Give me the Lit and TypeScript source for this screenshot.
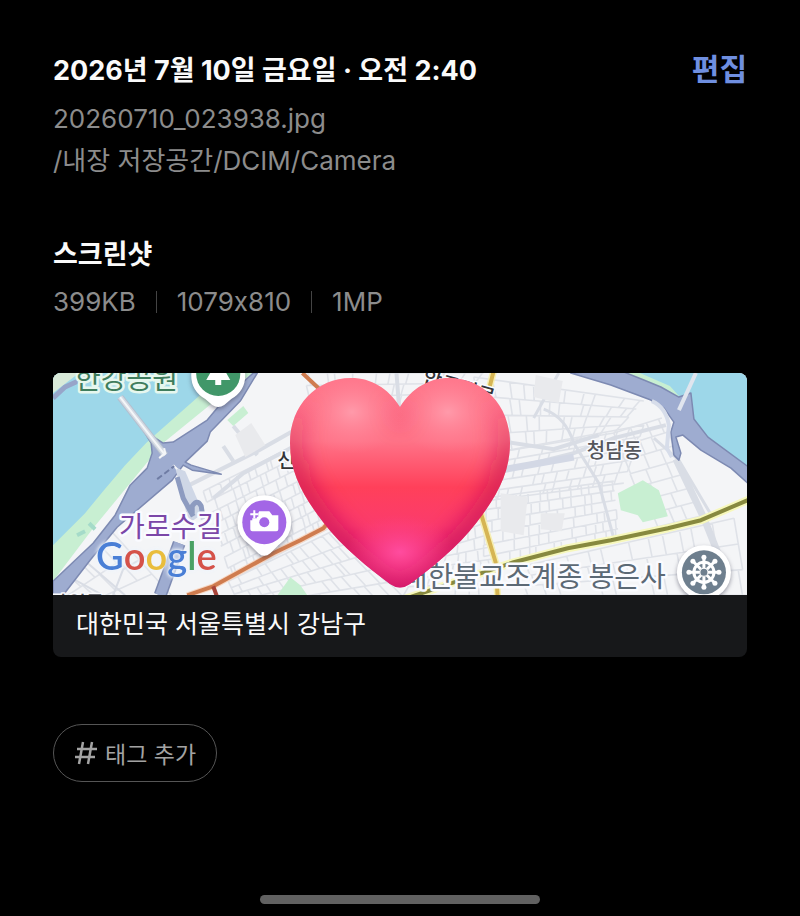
import { LitElement, html, svg, css } from "lit";
import { customElement, property } from "lit/decorators.js";

type Point = [number, number];

// fills a four-sided district with slightly irregular streets
function streets(a: Point, b: Point, c: Point, d: Point, cols: number, rows: number, seed = 1) {
  const at = (u: number, v: number) => {
    const x = (1 - v) * ((1 - u) * a[0] + u * b[0]) + v * ((1 - u) * d[0] + u * c[0]);
    const y = (1 - v) * ((1 - u) * a[1] + u * b[1]) + v * ((1 - u) * d[1] + u * c[1]);
    return `${x.toFixed(1)} ${y.toFixed(1)}`;
  };
  let n = seed;
  const random = () => {
    n = (n * 16807) % 2147483647;
    return n / 2147483647;
  };
  random();
  let path = "";
  for (let j = 0; j <= rows; j++) {
    path += `M${at(0, j / rows)}L${at(1, j / rows)}`;
  }
  for (let j = 0; j < rows; j++) {
    for (let i = 0; i <= cols; i++) {
      const u = Math.min(1, Math.max(0, (i + (random() - 0.5) * 0.7) / cols));
      if (random() > 0.12) path += `M${at(u, j / rows)}L${at(u, (j + 1) / rows)}`;
    }
  }
  return path;
}

const districts = [
  streets([150, 118], [262, 62], [285, 150], [178, 206], 13, 8, 11),
  streets([175, 208], [285, 155], [350, 222], [190, 240], 12, 5, 23),
  streets([250, 0], [430, 0], [400, 40], [262, 50], 10, 4, 37),
  streets([420, 4], [590, 28], [560, 60], [440, 80], 11, 4, 41),
  streets([440, 80], [590, 52], [570, 110], [430, 128], 12, 5, 53),
  streets([430, 125], [560, 108], [565, 165], [430, 195], 12, 6, 67),
  streets([560, 60], [608, 45], [650, 142], [598, 155], 3, 7, 71),
  streets([460, 195], [680, 145], [693, 222], [470, 222], 12, 3, 83),
  streets([380, 170], [430, 150], [445, 222], [350, 222], 6, 6, 97),
  streets([0, 212], [60, 158], [118, 222], [40, 245], 4, 3, 101),
];

@customElement("map-preview")
export class MapPreview extends LitElement {
  static styles = css`
    :host {
      display: block;
    }

    svg {
      display: block;
      width: 100%;
      height: auto;
    }

    text {
      font-family: "Noto Sans CJK KR", sans-serif;
      font-weight: 500;
      paint-order: stroke;
      stroke: #fafbff;
      stroke-width: 5px;
      stroke-linejoin: round;
    }

    .small {
      font-size: 20px;
      fill: #55565c;
      stroke-width: 3px;
    }

    .dark {
      fill: #333438;
    }

    .place {
      font-size: 28px;
      font-weight: 400;
    }

    .park {
      fill: #3f7d5d;
      stroke: #e6f7ee;
    }

    .street {
      fill: #7b47a8;
    }

    .temple {
      fill: #5c6975;
    }

    .logo {
      font-family: Lato, sans-serif;
      font-size: 38px;
      font-weight: 600;
      stroke: none;
      filter: drop-shadow(0 0 2px #eef4fc) drop-shadow(0 0 1px #eef4fc);
    }

    .blue {
      fill: #4a7fd6;
    }

    .red {
      fill: #d5524a;
    }

    .yellow {
      fill: #e9bd3d;
    }

    .green {
      fill: #4aa164;
    }

    .pin {
      filter: drop-shadow(0 2px 2px rgba(60, 60, 80, 0.5));
    }
  `;

  renderRoads() {
    return svg`
      <g fill="none" stroke="#dfe2e8" stroke-width="1.6">
        ${districts.map((d) => svg`<path d=${d} />`)}
      </g>
      <g fill="none" stroke="#d9dde5" stroke-width="4">
        <path d="M134 113L160 100L204 78L245 55M160 125L190 100L262 62" />
        <path d="M440 100L520 80L560 65L612 52M447 68L500 76L545 62" />
        <path d="M430 100L520 84" stroke="#d3d8e5" stroke-width="7" />
        <path d="M622 86L650 145L668 190" stroke-width="7" />
        <path d="M600 65L625 87L658 143M480 45L505 0M490 36Q512 44 520 70L545 110L560 165" stroke-width="3" />
        <path d="M170 73L180 88M180 53L204 82M343 0L346 40" />
        <path d="M60 222L70 196L98 180M10 200L50 222M30 186L72 222" stroke-width="2" />
      </g>
    `;
  }

  renderHighways() {
    return svg`
      <path d="M0 0H200L164 26L110 70L40 155L0 208Z" fill="#c8efd2" />
      <path d="M0 0H170L147 22L104 60L93 70L72 92L50 118L32 140L0 172Z" fill="#9dd7e9" />
      <path d="M0 0H26L0 20Z" fill="#d9ead9" />
      <path d="M0 25L12 14L36 3" fill="none" stroke="#97a5c9" stroke-width="5" />
      <path d="M24 162L32 158M36 150L42 156" stroke="#a5dbc9" stroke-width="4" />
      <path
        d="M200 0L180 18L164 35L154 47L120 69L110 70L90 57L98 70L99 80L94 95L77 112L62 142L40 170L0 208V222H10L37 187L64 154L119 107L130 92L139 97L168 101L138 92L132 89L154 68L157 59L187 28L204 0Z"
        fill="#9eacd0" stroke="#7d8ab2" stroke-width="1.5" stroke-linejoin="round" />
      <path d="M122 94L132 98L150 140L136 150L128 120Z" fill="#cfd7e6" />
      <path d="M124 104L130 125L140 143M139 140V133Q144 125 148 133L150 146" fill="none" stroke="#8d9bc0" stroke-width="5" />
      <path d="M126 170L107 222" fill="none" stroke="#7d8ab2" stroke-width="13" />
      <path d="M126 170L107 222" fill="none" stroke="#9eacd0" stroke-width="10" />
      <path d="M67 24L112 82" fill="none" stroke="#b5bfce" stroke-width="7" />
      <path d="M67 24L112 82" fill="none" stroke="#d3dae3" stroke-width="5" />
      <path d="M67 24L112 82M106 85L112 80L111 75M120 92L124 96" fill="none" stroke="#f4f6f8" stroke-width="2" />
      <path d="M104 106L121 93" fill="none" stroke="#6f7ca4" stroke-width="2" stroke-dasharray="6 3" />

      <path d="M570 0H693V98L654 68L624 24Z" fill="#9dd7e9" />
      <path d="M568 0H586L616 13L626 24L604 16Z" fill="#c8efd2" />
      <path
        d="M517 0L557 12L597 27L610 35L620 49L617 59L620 82L625 87L627 80L622 64L629 62L647 77L677 95L696 112V95L654 64L640 46L637 20L625 24L607 14L590 7L565 -3Z"
        fill="#9eacd0" stroke="#7d8ab2" stroke-width="1.5" stroke-linejoin="round" />
      <path d="M598 28Q612 34 615 52L613 75L618 84" fill="none" stroke="#d7ddea" stroke-width="4" />
      <path d="M642 0L625 37" fill="none" stroke="#e0e5ee" stroke-width="4" />
    `;
  }

  renderMainRoads() {
    return svg`
      <g fill="none" stroke-linejoin="round">
        <path d="M134 222L160 213L220 180L247 167L270 155L300 120" stroke="#f7d7c3" stroke-width="6" />
        <path d="M134 222L160 213L220 180L247 167L270 155L300 120M249 0L266 16" stroke="#cf7c4f" stroke-width="4" />
        <path d="M160 213L164 224" stroke="#a8443a" stroke-width="4" />
        <path d="M440 -2L436 14M426 136L442 189L444 224" stroke="#f6efb4" stroke-width="7" />
        <path d="M440 -2L436 14M426 136L442 189L444 224" stroke="#d6b554" stroke-width="4" />
        <path d="M350 226L460 189L514 175L557 167L614 155L647 147L696 126" stroke="#f7f8bb" stroke-width="8" />
        <path d="M350 226L460 189L514 175L557 167L614 155L647 147L696 126" stroke="#87893f" stroke-width="4" />
      </g>
    `;
  }

  renderPins() {
    return svg`
      <g class="pin" fill="#fff">
        <path d="M138 2a27 27 0 0 1 54 0q0 16-14 24l-7 6q-6 4-12 0l-7-6q-14-8-14-24Z" />
        <path d="M184 149a27 27 0 0 1 54 0q0 14-13 23l-8 8q-6 5-12 0l-8-8q-13-9-13-23Z" />
        <circle cx="650" cy="199" r="27" />
      </g>
      <circle cx="165" cy="1" r="22" fill="#419769" />
      <path d="M165-14L177 7H168V12H162V7H153Z" fill="#fff" />
      <circle cx="211" cy="149" r="22" fill="#a366e6" />
      <path
        d="M197 147h2v-5h4l3-4h10l3 4h6v14q0 2-2 2h-24q-2 0-2-2Z"
        fill="#fff" />
      <circle cx="211" cy="149" r="5" fill="#a366e6" />
      <path d="M201 137v8M197 141h8" stroke="#a366e6" stroke-width="5" />
      <path d="M201 137v8M197 141h8" stroke="#fff" stroke-width="2" />
      <circle cx="650" cy="199" r="22" fill="#6e7f8e" />
      <g fill="none" stroke="#fff" stroke-width="3">
        <circle cx="650" cy="199" r="10" />
        <path d="M650 184V195M650 203V214M635 199H646M654 199H665M639 188L647 196M653 202L661 210M661 188L653 196M647 202L639 210" />
      </g>
      <g fill="#fff">
        <circle cx="650" cy="184" r="2.5" /><circle cx="650" cy="214" r="2.5" />
        <circle cx="635" cy="199" r="2.5" /><circle cx="665" cy="199" r="2.5" />
        <circle cx="639" cy="188" r="2.5" /><circle cx="661" cy="188" r="2.5" />
        <circle cx="639" cy="210" r="2.5" /><circle cx="661" cy="210" r="2.5" />
      </g>
      <circle cx="650" cy="199" r="4" fill="#6e7f8e" stroke="#fff" />
    `;
  }

  render() {
    return html`
      <svg viewBox="0 0 693 222">
        <rect width="693" height="222" fill="#f4f5f7" />
        ${this.renderRoads()}
        <g fill="#e9eaed">
          <path d="M482 2L509 8L505 30L480 24Z" />
          <path d="M447 120L474 124L470 162L447 158Z" />
          <path d="M487 140H511L508 158L487 156Z" />
          <path d="M182 62L198 50L212 72L192 84Z" />
        </g>
        <g fill="#c8efd2">
          <path d="M564 120L589 107L605 117L614 143L589 149L584 142L567 137Z" />
          <path d="M174 47L190 33L195 40L180 53Z" />
          <path d="M224 222L237 204L247 212L254 222Z" />
        </g>
        ${this.renderHighways()}
        ${this.renderMainRoads()}
        <text class="small" x="-4" y="238">잠원동</text>
        <text class="small dark" x="224" y="95">신사동</text>
        <text class="small dark" x="368" y="11" transform="rotate(16 368 11)">압구정로</text>
        <text class="small" x="533" y="85">청담동</text>
        <text class="place park" x="22" y="16">한강공원</text>
        <text class="place street" x="66" y="164">가로수길</text>
        <text class="place temple" x="612" y="214" text-anchor="end">대한불교조계종 봉은사</text>
        ${this.renderPins()}
        <text class="logo" x="43" y="197"><tspan class="blue">G</tspan><tspan class="red">o</tspan><tspan class="yellow">o</tspan><tspan class="blue">g</tspan><tspan class="green">l</tspan><tspan class="red">e</tspan></text>
      </svg>
    `;
  }
}

@customElement("heart-sticker")
export class HeartSticker extends LitElement {
  static styles = css`
    :host {
      display: block;
    }

    svg {
      display: block;
      width: 100%;
    }
  `;

  render() {
    const shape =
      "M110 29C98 10 81 0 61 0C27 0 0 27 0 65C0 96 14 119 33 144C52 169 80 191 100 206Q110 213 120 206C140 191 168 169 187 144C206 119 220 96 220 65C220 27 193 0 159 0C139 0 122 10 110 29Z";
    return html`
      <svg viewBox="0 0 220 210">
        <defs>
          <linearGradient id="base" x1="0" y1="0" x2="0" y2="1">
            <stop offset="0" stop-color="#ff7489" />
            <stop offset="0.3" stop-color="#ff7388" />
            <stop offset="0.52" stop-color="#ff405a" />
            <stop offset="0.7" stop-color="#fb3b6c" />
            <stop offset="1" stop-color="#e0207c" />
          </linearGradient>
          <radialGradient id="shine">
            <stop offset="0" stop-color="#ff9aaa" />
            <stop offset="1" stop-color="#ff8093" stop-opacity="0" />
          </radialGradient>
          <radialGradient id="glow">
            <stop offset="0" stop-color="#ff4c9f" />
            <stop offset="1" stop-color="#ff3f80" stop-opacity="0" />
          </radialGradient>
          <linearGradient id="edge" x1="0" y1="0" x2="0" y2="1">
            <stop offset="0.1" stop-color="#d41a50" stop-opacity="0" />
            <stop offset="0.4" stop-color="#c9164f" stop-opacity="0.7" />
            <stop offset="1" stop-color="#cc1262" stop-opacity="0.9" />
          </linearGradient>
          <filter id="soft" x="-20%" y="-20%" width="140%" height="140%">
            <feGaussianBlur stdDeviation="11" />
          </filter>
          <clipPath id="heart"><path d=${shape} /></clipPath>
        </defs>
        <g clip-path="url(#heart)">
          <rect width="220" height="210" fill="url(#base)" />
          <ellipse cx="62" cy="34" rx="52" ry="42" fill="url(#shine)" />
          <ellipse cx="158" cy="34" rx="52" ry="42" fill="url(#shine)" />
          <path d=${shape} fill="none" stroke="url(#edge)" stroke-width="24" filter="url(#soft)" />
          <ellipse cx="110" cy="174" rx="54" ry="38" fill="url(#glow)" />
        </g>
      </svg>
    `;
  }
}

@customElement("app-root")
export class AppRoot extends LitElement {
  @property({ type: String }) taken = "2026년 7월 10일 금요일 · 오전 2:40";
  @property({ type: String }) file = "20260710_023938.jpg";
  @property({ type: String }) folder = "/내장 저장공간/DCIM/Camera";
  @property({ type: String }) place = "대한민국 서울특별시 강남구";
  @property({ type: Array }) facts = ["399KB", "1079x810", "1MP"];

  static styles = css`
    :host {
      display: flex;
      flex-direction: column;
      box-sizing: border-box;
      min-height: 100vh;
      padding: 50px 53px 12px;
      background: #000;
      color: #fafafa;
      font-family: Inter, "Noto Sans CJK KR", sans-serif;
    }

    header {
      display: flex;
      justify-content: space-between;
      align-items: flex-start;
    }

    h1,
    h2,
    p {
      margin: 0;
    }

    h1,
    h2 {
      font-size: 27px;
      line-height: 42px;
      font-weight: 700;
    }

    button {
      padding: 0;
      border: 0;
      background: none;
      font-family: inherit;
      cursor: pointer;
    }

    .edit {
      color: #6f8fe0;
      font-size: 30px;
      line-height: 38px;
      font-weight: 700;
    }

    .details,
    .facts {
      color: #8c8c8c;
      font-size: 26px;
      line-height: 42px;
    }

    .details {
      margin-top: 6px;
    }

    .kind {
      margin-top: 52px;
    }

    /* keeps the x in the resolution a plain letter */
    .facts {
      display: flex;
      align-items: center;
      margin: 5px 0 0;
      padding: 0;
      list-style: none;
      font-feature-settings: "calt" 0;
    }

    .facts li {
      display: flex;
      align-items: center;
    }

    .facts li + li::before {
      content: "";
      width: 1px;
      height: 22px;
      margin: 0 20px;
      background: #444;
    }

    .location {
      position: relative;
      margin: 50px 0 0;
      border-radius: 8px;
      overflow: hidden;
      background: #17181a;
    }

    .location figcaption {
      padding: 8px 23px 12px;
      font-size: 25px;
      line-height: 42px;
    }

    .sticker {
      position: absolute;
      top: 5px;
      left: 50%;
      width: 220px;
      margin-left: -110px;
    }

    .tag {
      display: flex;
      align-items: center;
      align-self: flex-start;
      gap: 7px;
      box-sizing: border-box;
      height: 58px;
      margin-top: 67px;
      padding: 0 20px;
      border: 1px solid #555;
      border-radius: 29px;
      color: #a3a3a3;
      font-size: 23px;
    }

    .tag svg {
      width: 24px;
      height: 24px;
    }

    .home {
      width: 280px;
      height: 9px;
      margin: auto auto 0;
      border-radius: 5px;
      background: #616161;
    }
  `;

  render() {
    return html`
      <header>
        <h1>${this.taken}</h1>
        <button class="edit">편집</button>
      </header>
      <div class="details">
        <p>${this.file}</p>
        <p>${this.folder}</p>
      </div>
      <h2 class="kind">스크린샷</h2>
      <ul class="facts">
        ${this.facts.map((fact) => html`<li>${fact}</li>`)}
      </ul>
      <figure class="location">
        <map-preview></map-preview>
        <figcaption>${this.place}</figcaption>
        <heart-sticker class="sticker"></heart-sticker>
      </figure>
      <button class="tag">
        <svg viewBox="0 0 24 24" fill="none" stroke="currentColor" stroke-width="2.5">
          <path d="M9 1L5 23M18 1L14 23M3 8H23M1 16H21" />
        </svg>
        태그 추가
      </button>
      <div class="home"></div>
    `;
  }
}
